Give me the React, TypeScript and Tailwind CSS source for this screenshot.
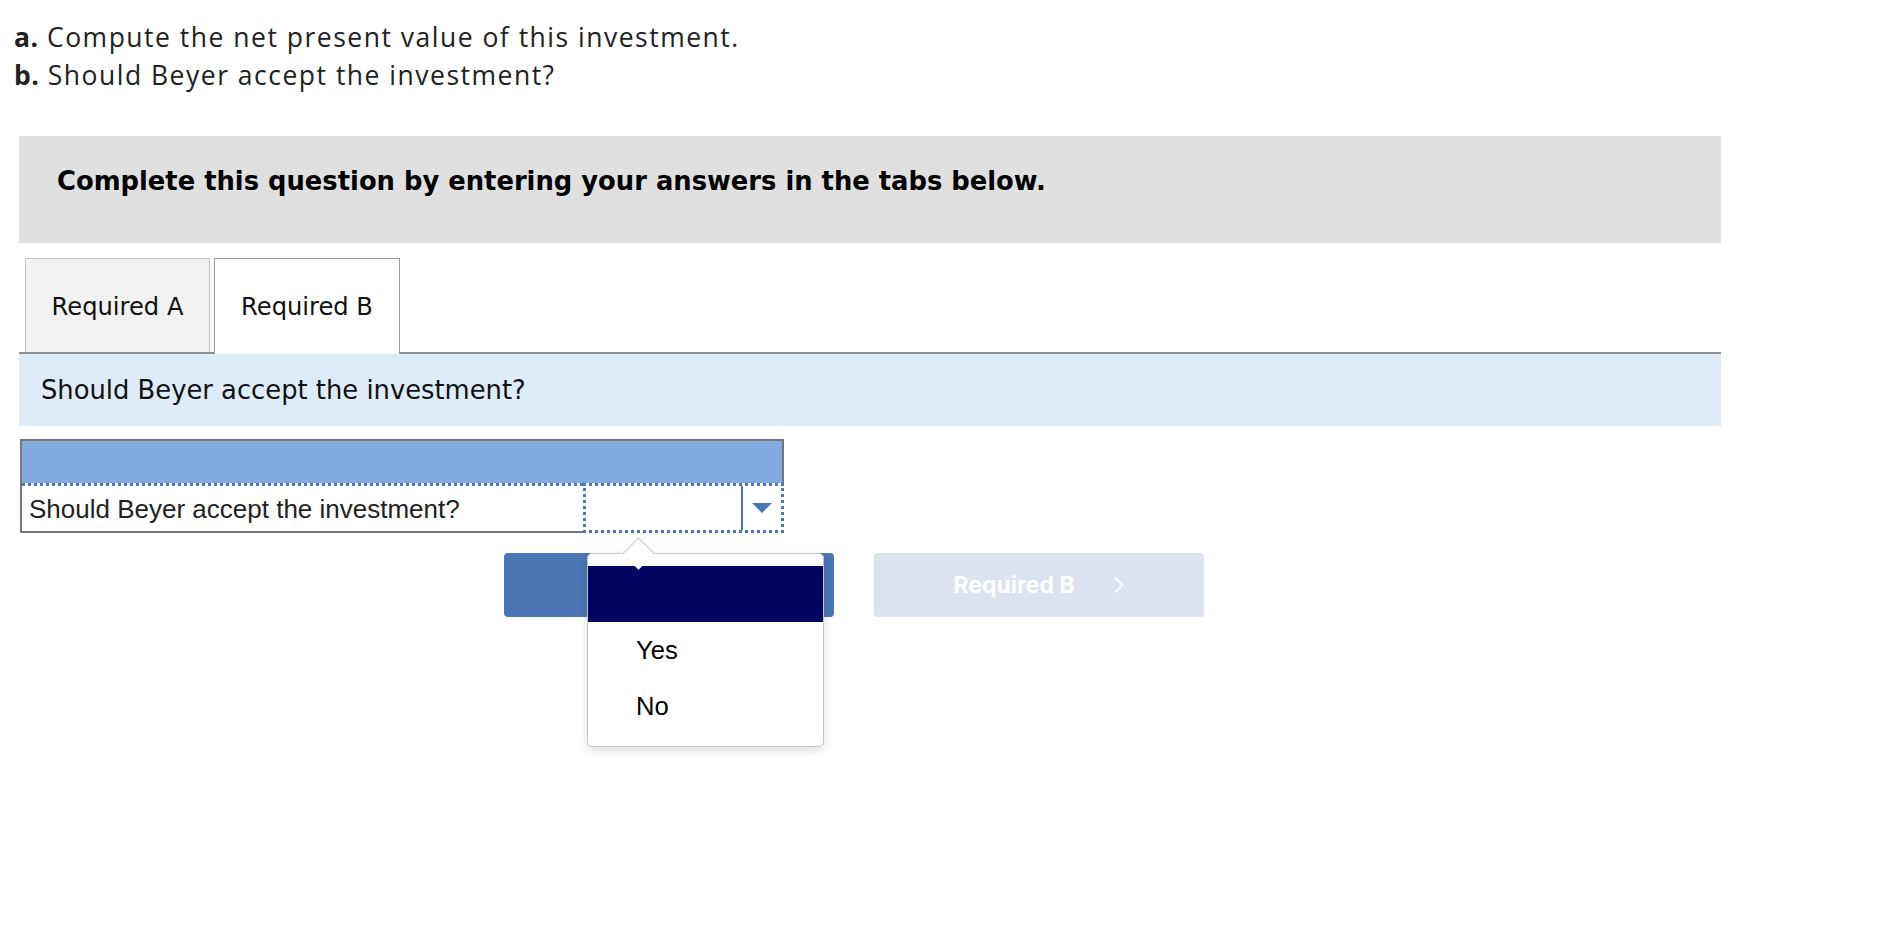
import { ChevronLeft, ChevronRight } from "lucide-react";

const HEADER_FONT = { fontFamily: "'Open Sans', Lato, sans-serif" };

/** The question prompt above the answer area. */
const Prompt = () => (
  <div
    className="pl-[14px] pt-[18px] text-[26.5px] leading-[38px] tracking-[1.5px] text-[#222]"
    style={HEADER_FONT}
  >
    <p>
      <span className="font-bold tracking-[0.5px]">a.</span> Compute the net present value of this investment.
    </p>
    <p>
      <span className="font-bold tracking-[0.5px]">b.</span> Should Beyer accept the investment?
    </p>
  </div>
);

/** Tab strip: A is idle, B is the open tab and breaks through the bottom rule. */
const Tabs = () => (
  <div className="mt-[15px] flex h-[96px] items-end gap-[4px] border-b-2 border-[#8f8f8f] pl-[6px] font-['DejaVu_Sans',sans-serif] text-[24.2px] text-[#111]">
    <div className="flex h-[94px] w-[185px] items-center justify-center border border-b-0 border-[#c4c4c4] bg-[#f2f2f2] pt-[4px]">
      Required A
    </div>
    <div className="-mb-[2px] flex h-[96px] w-[186px] items-center justify-center border border-b-0 border-[#999] bg-white pt-[2px]">
      Required B
    </div>
  </div>
);

/** Answer grid with the focused dropdown cell. */
const AnswerTable = () => (
  <div className="ml-px mt-[13px] w-[764px] font-['Liberation_Sans',Arial,sans-serif] text-[26px] text-[#222]">
    <div className="h-[44px] border-2 border-b-0 border-[#777] bg-[#83abdf]" />
    <div className="flex h-[50px]">
      <div className="flex flex-1 flex-col border-b-2 border-l-2 border-[#777]">
        <div className="border-t-[3px] border-dotted border-[#4a76b8]" />
        <div className="flex flex-1 items-center pl-[7px] pt-[2px]">
          Should Beyer accept the investment?
        </div>
      </div>
      <div className="flex w-[201px] border-[3px] border-dotted border-[#4a76b8]">
        <div className="flex-1 border-r-2 border-[#4a76b8]" />
        <div className="flex w-[38px] items-center justify-center">
          <svg width="20" height="10" viewBox="0 0 20 10" aria-hidden="true">
            <path d="M0 0h20L10 10z" fill="#4a76b8" />
          </svg>
        </div>
      </div>
    </div>
  </div>
);

/** The open option list anchored under the dropdown. */
const OptionList = () => (
  <div className="absolute left-[587px] top-[553px] font-['Liberation_Sans',Arial,sans-serif] text-[25.6px] text-black">
    <div className="h-[194px] w-[237px] rounded-[5px] border border-[#c6c6c6] bg-white pt-[12px] shadow-[0_4px_10px_rgba(0,0,0,0.12)]">
      <div className="h-[56px] bg-[#000660]" />
      <div className="flex h-[56px] items-center pl-[48px]">Yes</div>
      <div className="flex h-[56px] items-center pl-[48px]">No</div>
    </div>
    <div className="absolute left-[40px] top-[-11px] h-[23px] w-[23px] rotate-45 border-l border-t border-[#c6c6c6] bg-white" />
  </div>
);

export default function App() {
  return (
    <div className="relative h-[940px] w-[1890px] bg-white">
      <Prompt />

      <div className="ml-[19px] w-[1702px]">
        <div className="mt-[42px] h-[107px] bg-[#e0e0e0] px-[38px] pt-[30px] font-['DejaVu_Sans',sans-serif] text-[25.8px] font-bold leading-[30px] text-black">
          Complete this question by entering your answers in the tabs below.
        </div>

        <Tabs />

        <div className="flex h-[72px] items-center bg-[#ddecf8] pl-[22px] font-['DejaVu_Sans',sans-serif] text-[25.8px] text-[#111]">
          Should Beyer accept the investment?
        </div>

        <AnswerTable />
      </div>

      <div className="ml-[504px] mt-[20px] flex gap-[40px] font-['Inter',sans-serif] text-[23px] font-bold text-white">
        <button className="flex h-[64px] w-[330px] items-center justify-center gap-4 rounded-[4px] bg-[#4a76b3]">
          <ChevronLeft size={26} strokeWidth={1.5} />
          Required A
        </button>
        <button className="flex h-[64px] w-[330px] items-center justify-center gap-[30px] rounded-[4px] bg-[#dae3ef] pl-[8px]">
          Required B
          <ChevronRight size={28} strokeWidth={1.5} />
        </button>
      </div>

      <OptionList />
    </div>
  );
}
